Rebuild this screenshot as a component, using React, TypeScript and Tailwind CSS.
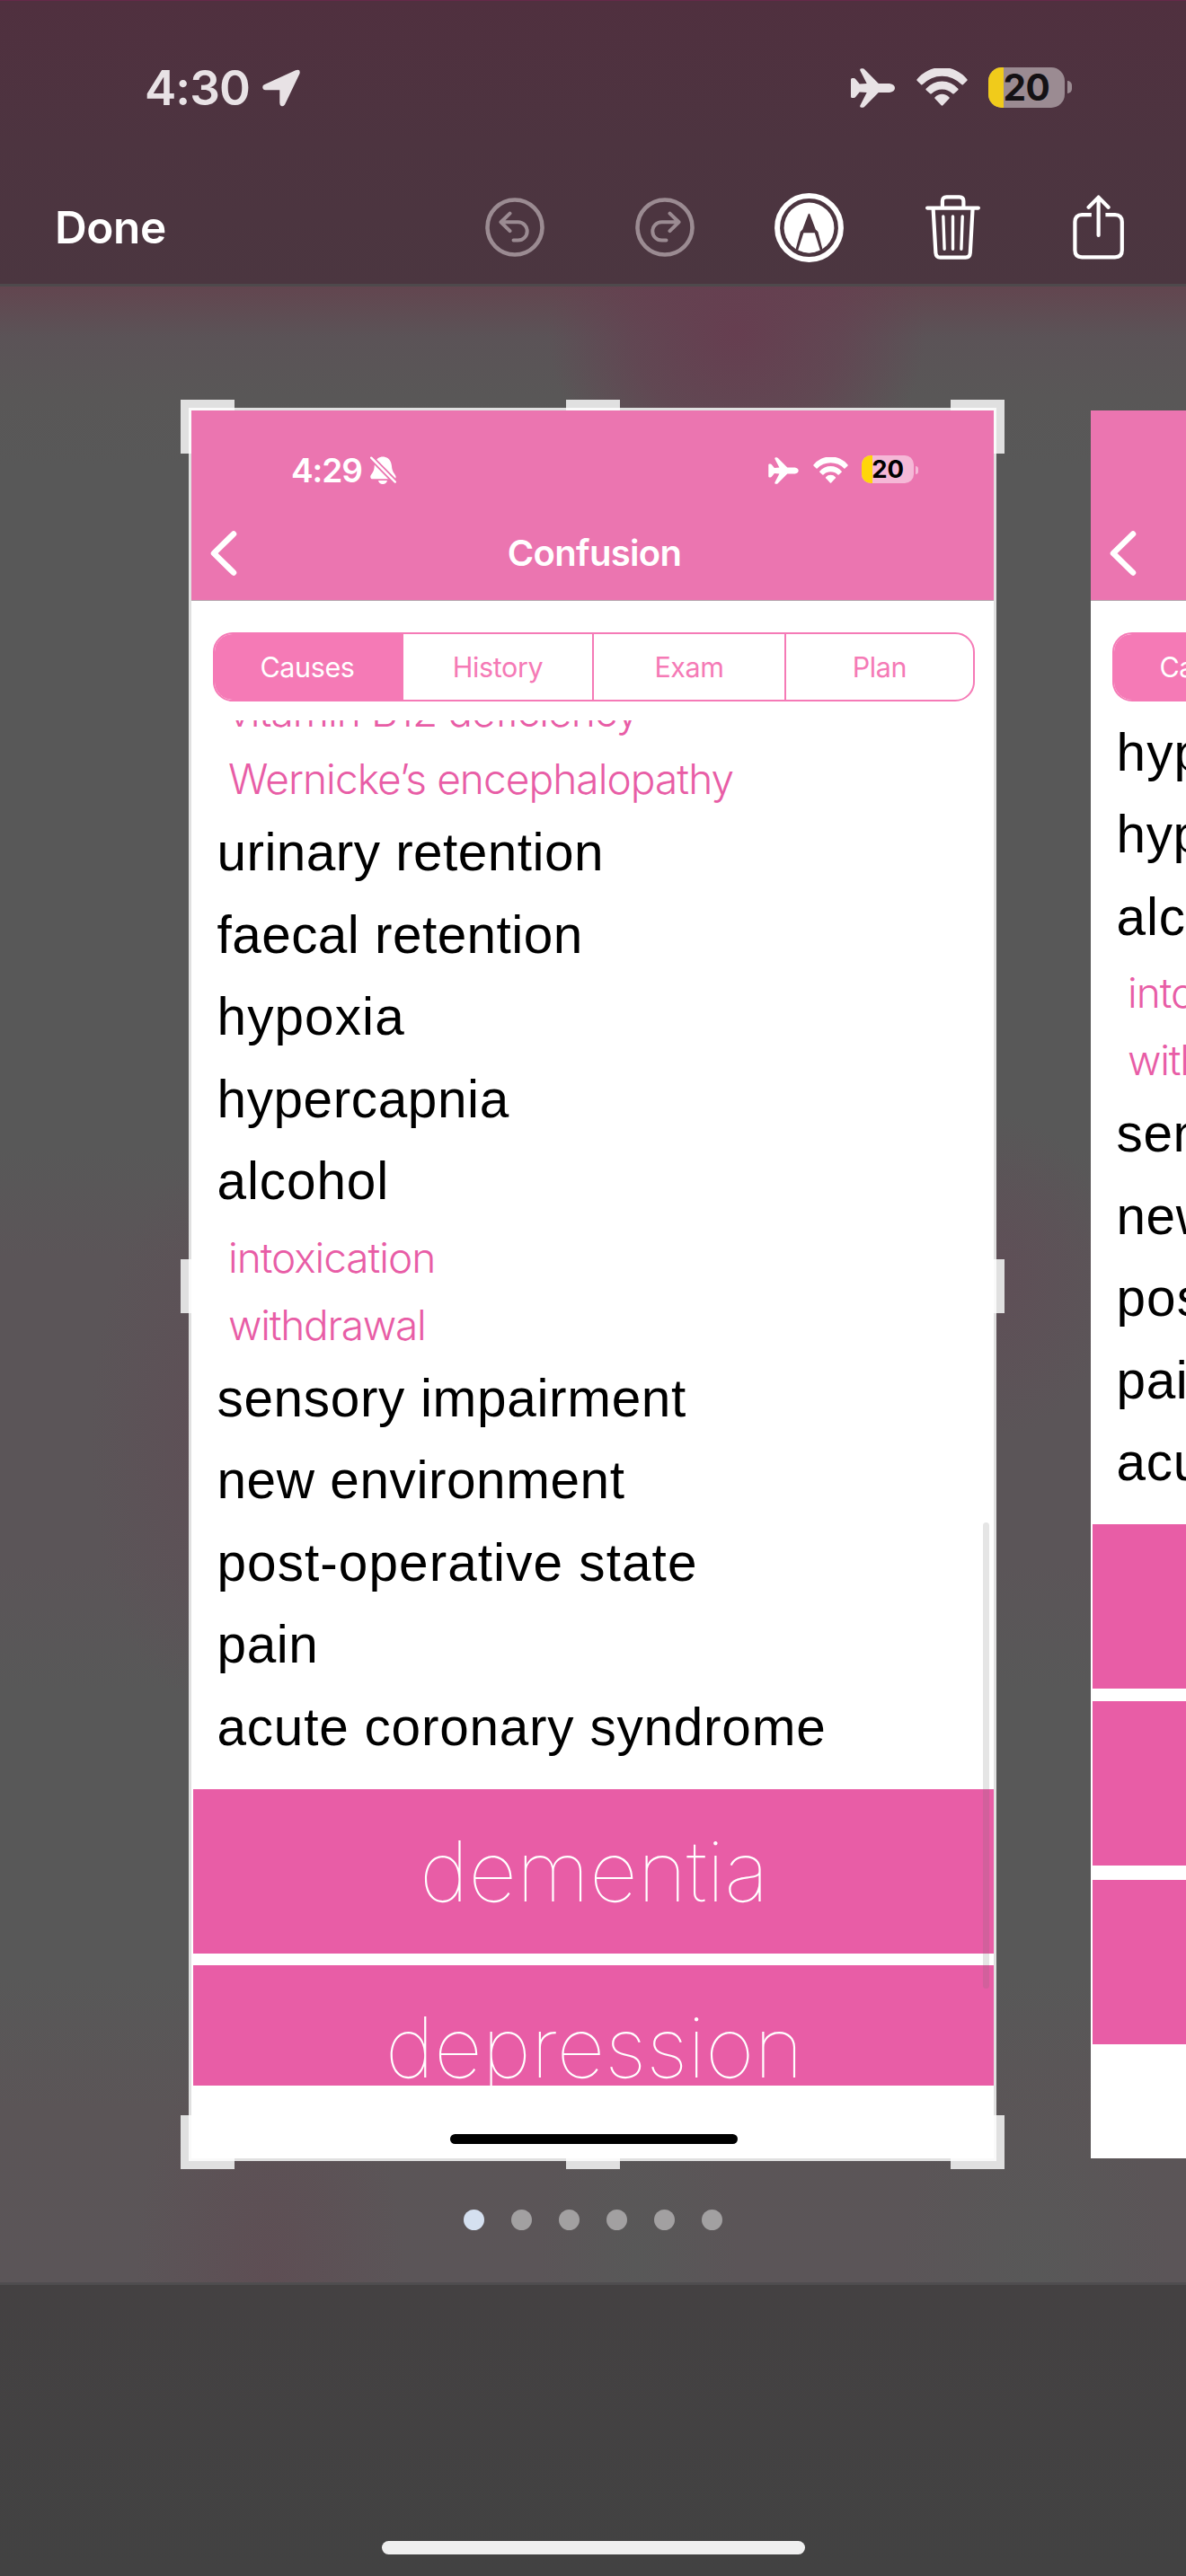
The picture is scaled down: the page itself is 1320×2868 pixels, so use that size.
import React from "react";

type Row = { text: string; sub?: boolean; tracking?: string };

const ROWS: Row[] = [
  { text: "vitamin B12 deficiency", sub: true, tracking: "tracking-[-0.95px]" },
  { text: "Wernicke’s encephalopathy", sub: true, tracking: "tracking-[-0.94px]" },
  { text: "urinary retention", tracking: "tracking-[0.45px]" },
  { text: "faecal retention", tracking: "tracking-[0.45px]" },
  { text: "hypoxia", tracking: "tracking-[1.1px]" },
  { text: "hypercapnia", tracking: "tracking-[0.6px]" },
  { text: "alcohol", tracking: "tracking-[0.9px]" },
  { text: "intoxication", sub: true, tracking: "tracking-[-1.05px]" },
  { text: "withdrawal", sub: true, tracking: "tracking-[-1.25px]" },
  { text: "sensory impairment", tracking: "tracking-[0.67px]" },
  { text: "new environment", tracking: "tracking-[0.57px]" },
  { text: "post-operative state", tracking: "tracking-[1.06px]" },
  { text: "pain", tracking: "tracking-[0.6px]" },
  { text: "acute coronary syndrome", tracking: "tracking-[0.78px]" },
];

const Airplane = ({ className }: { className: string }) => (
  <svg viewBox="0 0 49 44" className={className} fill="currentColor">
    <path d="M0 12.5Q0 11 1.5 11H3.2Q4.5 11 5.2 12L9.7 17.6L17.7 17L10.3 2.5Q9.8 .3 12 .3H13Q14.5 .3 15.5 1.6L30.8 17H43Q49 18 49 22Q49 26 43 27H30.8L15.5 42.4Q14.5 43.7 13 43.7H12Q9.8 43.7 10.3 41.5L17.7 27L9.7 26.4L5.2 32Q4.5 33 3.2 33H1.5Q0 33 0 31.5Z" />
  </svg>
);

const Wifi = ({ className }: { className: string }) => (
  <svg viewBox="0 0 57 42" className={className} fill="currentColor">
    <path d="M.6 12.2A36 36 0 0 1 56.4 12.2Q57 13 56.4 13.7L51.8 18.2Q51 18.8 50.2 18.1A30 30 0 0 0 6.8 18.1Q6 18.8 5.2 18.2L.6 13.7Q0 13 .6 12.2Z" />
    <path d="M10.6 22.8A23.5 23.5 0 0 1 46.4 22.8Q47 23.6 46.3 24.3L41.8 28.2Q41 28.8 40.2 28.2A16.7 16.7 0 0 0 16.8 28.2Q16 28.8 15.2 28.2L10.7 24.3Q10 23.6 10.6 22.8Z" />
    <path d="M20.6 32.3A10.5 10.5 0 0 1 36.4 32.3Q37 33 36.4 33.8L29.4 41.3Q28.5 42.2 27.6 41.3L20.6 33.8Q20 33 20.6 32.3Z" />
  </svg>
);

const Chevron = () => (
  <svg viewBox="0 0 30 50" className="ml-[21px] h-[50px] w-[30px]" fill="none" stroke="white" strokeWidth="6.5" strokeLinecap="round" strokeLinejoin="round">
    <path d="M26 3.5L4 25L26 46.5" />
  </svg>
);

const BellSlash = () => (
  <svg viewBox="0 0 29 31" className="ml-[10px] h-[31px] w-[29px]">
    <path fill="white" d="M14 .5C19.5 .5 23.5 4.5 24 11C24.3 17 27 19 28.5 22Q29 25.2 26.5 25.2H2Q0 25 .3 22C1.5 19.5 4.5 17 4.7 11C5 4.5 9 .5 14 .5ZM9 27H19Q18 31 14 31Q10 31 9 27Z" />
    <path d="M1 1.5L28 28.8" stroke="#eb75b0" strokeWidth="6" />
    <path d="M1.2 1.7L27.8 28.6" stroke="white" strokeWidth="2.4" strokeLinecap="round" />
  </svg>
);

const Undo = ({ className }: { className: string }) => (
  <svg viewBox="0 0 66 66" className={className} fill="none" stroke="#9b8b92" strokeWidth="4" strokeLinecap="round" strokeLinejoin="round">
    <circle cx="33" cy="33" r="30.5" strokeWidth="4.6" />
    <path d="M27.5 17.6L17.5 27.3L27.5 37.2M18 27.3H36.6A10.1 10.1 0 0 1 36.6 47.5H31.5" />
  </svg>
);

const Markup = () => (
  <svg viewBox="0 0 77 77" className="ml-[89px] size-[77px]">
    <circle cx="38.5" cy="38.5" r="35.4" fill="none" stroke="white" strokeWidth="6" />
    <circle cx="38.5" cy="38.5" r="27.9" fill="white" />
    <path fill="#4c353f" d="M37.4 24Q38.5 21.5 39.6 24L45.8 40.6L48.4 43L53.4 62.4L50.6 64.5H26.4L23.6 62.4L28.8 43L31.2 40.6Z" />
    <path fill="white" d="M32.4 44.2H44.8L50.8 63.6Q45 66.4 38.5 66.4Q32 66.4 26.2 63.6Z" />
  </svg>
);

const Trash = () => (
  <svg viewBox="0 0 61 73" className="ml-[91px] h-[73px] w-[61px]" fill="none" stroke="white" strokeWidth="4.2" strokeLinecap="round" strokeLinejoin="round">
    <path d="M2.1 14.6H58.9M18.9 14V7Q18.9 2.4 23.5 2.4H37.8Q42.4 2.4 42.4 7V14" />
    <path d="M8.6 15L11.4 64.5Q11.8 69.6 16.5 69.6H44.8Q49.4 69.6 49.8 64.5L52.6 15" />
    <path strokeWidth="3.4" d="M19.8 24L21.1 60.3M30.5 24V60.3M41.2 24L39.9 60.3" />
  </svg>
);

const Share = () => (
  <svg viewBox="0 0 58 73" className="ml-[103px] h-[73px] w-[58px]" fill="none" stroke="white" strokeWidth="4.2" strokeLinecap="round" strokeLinejoin="round">
    <path strokeLinecap="butt" d="M20.8 22.2H10.2Q2.4 22.2 2.4 30V61.6Q2.4 69.4 10.2 69.4H47Q54.8 69.4 54.8 61.6V30Q54.8 22.2 47 22.2H36.4" />
    <path d="M28.6 3V45M17.6 13.8L28.6 2.6L39.6 13.8" />
  </svg>
);

function Band({ label, className }: { label: string; className: string }) {
  return (
    <div className={`flex h-[183px] shrink-0 items-center justify-center bg-[#e85da6] pl-[2px] font-[Inter] text-[94px] font-thin text-white ${className}`}>
      <span className="tracking-[-0.3px]">{label}</span>
    </div>
  );
}

function AppShot({ rows, className, inset, last }: { rows: Row[]; className: string; inset: string; last?: boolean }) {
  return (
    <div className="relative flex h-[1946px] w-[893px] shrink-0 flex-col bg-white">
      <header className="h-[212px] shrink-0 border-b border-[#b5a5ad] bg-[#eb75b0] font-[Inter] text-white">
        <div className="flex h-[132px] items-center pt-[1px]">
          <span className="ml-[111px] w-[78px] text-[37px] leading-none font-semibold tracking-[-1.1px]">4:29</span>
          <BellSlash />
          <Airplane className="ml-[414px] h-[30px] w-[34px]" />
          <Wifi className="ml-[16px] h-[29px] w-[39px]" />
          <div className="relative -top-px ml-[15px] flex h-[31px] w-[58px] items-center justify-center overflow-hidden rounded-[10px] bg-[#f5b8d7]">
            <div className="absolute inset-y-0 left-0 w-[12px] bg-[#ffd60a]" />
            <span className="relative text-[27.5px] leading-[31px] font-bold tracking-[-0.3px] text-black">20</span>
          </div>
          <div className="ml-[2px] h-[9px] w-[3px] rounded-r-full bg-[#f5b8d7]" />
        </div>
        <div className="grid grid-cols-[160px_1fr_160px] items-center pt-[2px]">
          <Chevron />
          <h1 className="pl-[4px] text-center text-[40px] leading-[50px] font-semibold tracking-[-0.7px]">Confusion</h1>
        </div>
      </header>
      <div className="mt-[35px] ml-[24px] grid h-[77px] w-[848px] shrink-0 grid-cols-[210px_212px_214px_1fr] overflow-hidden rounded-[22px] border-2 border-[#f57ab6] font-[Inter] text-[30.5px] tracking-[-0.4px] text-[#f57ab6]">
        <div className="flex items-center justify-center bg-[#f57ab6] pr-[4px] text-white">Causes</div>
        <div className="flex items-center justify-center border-r-2 border-[#f57ab6]">History</div>
        <div className="flex items-center justify-center border-r-2 border-[#f57ab6]">Exam</div>
        <div className="flex items-center justify-center">Plan</div>
      </div>
      <div className="mt-[21px] h-[1520px] shrink-0 overflow-hidden">
        <div className={`flex flex-col ${className}`}>
          {rows.map((r) =>
            r.sub ? (
              <div key={r.text} className={`h-[75px] pl-[41px] font-[Inter] text-[46px] leading-[78px] font-light whitespace-nowrap text-[#e85da6] ${r.tracking}`}>
                {r.text}
              </div>
            ) : (
              <div key={r.text} className={`h-[91.5px] pl-[28.5px] font-['Liberation_Sans'] text-[58.5px] leading-[91.5px] whitespace-nowrap text-black ${r.tracking}`}>
                {r.text}
              </div>
            ),
          )}
          <div className={`mt-[23.5px] flex flex-col ${inset}`}>
            <Band label="dementia" className="" />
            <Band label="depression" className="mt-[13.5px]" />
            {last && <Band label="mania" className="mt-[16.5px]" />}
          </div>
        </div>
      </div>
      <div className="mt-[54px] ml-[288px] h-[11px] w-[320px] shrink-0 rounded-full bg-black" />
    </div>
  );
}

const HANDLES = [
  "top-[445px] left-[201px] h-[12px] w-[60px]",
  "top-[457px] left-[201px] h-[48px] w-[12px]",
  "top-[445px] left-[630px] h-[12px] w-[60px]",
  "top-[445px] left-[1058px] h-[12px] w-[60px]",
  "top-[457px] left-[1106px] h-[48px] w-[12px]",
  "top-[1402px] left-[201px] h-[60px] w-[12px]",
  "top-[1402px] left-[1106px] h-[60px] w-[12px]",
  "top-[2355px] left-[201px] h-[48px] w-[12px]",
  "top-[2403px] left-[201px] h-[12px] w-[60px]",
  "top-[2403px] left-[630px] h-[12px] w-[60px]",
  "top-[2403px] left-[1058px] h-[12px] w-[60px]",
  "top-[2355px] left-[1106px] h-[48px] w-[12px]",
];

const BACKDROP =
  "bg-[radial-gradient(ellipse_210px_190px_at_820px_370px,#663e50_0%,#663e5099_55%,transparent_100%),radial-gradient(ellipse_130px_300px_at_230px_1600px,#5e4f56_0%,transparent_100%),radial-gradient(ellipse_130px_180px_at_1110px_1420px,#5f4f57_0%,transparent_100%),radial-gradient(ellipse_150px_300px_at_300px_2541px,#5e4e54_0%,transparent_100%),radial-gradient(ellipse_150px_240px_at_1150px_2541px,#585858_0%,transparent_100%),radial-gradient(ellipse_110px_200px_at_710px_2520px,#585858_0%,transparent_100%),linear-gradient(#63454f_316px,#5b5357_375px,#595757_440px,#585858_520px,#585858_1280px,#5b5558_1400px,#5b5558_1740px,#585858_1880px,#585858_2200px,#5b5557_2350px,#5b5558_2541px)]";

export default function App() {
  return (
    <div className={`relative flex h-[2868px] w-[1320px] flex-col overflow-hidden ${BACKDROP}`}>
      <div className="h-[319px] shrink-0 border-t border-b-[3px] border-t-[#66294a] border-b-[#4e494c] bg-[linear-gradient(#50303f,#4d3440_50%,#4b3640)] font-[Inter]">
        <div className="flex h-[194px] items-center text-[#e8e2e5]">
          <span className="ml-[161px] w-[121px] text-[53px] leading-none font-semibold tracking-[-1px]">4:30</span>
          <svg viewBox="0 0 42 42" className="ml-[10px] h-[42px] w-[42px]" fill="currentColor">
            <path d="M2 17.3L37 1.2Q42.8 -.8 41.5 5L25 39.5Q23.5 42 21 41Q19.3 40 19.3 37.5V23.2H3.5Q.5 23 .3 20.5Q.1 18.2 2 17.3Z" />
          </svg>
          <Airplane className="ml-[613px] h-[44px] w-[49px]" />
          <Wifi className="relative -top-px ml-[24px] h-[42px] w-[57px]" />
          <div className="relative -top-px ml-[23px] flex h-[45px] w-[85px] items-center justify-center overflow-hidden rounded-[15px] bg-[#9b8b92]">
            <div className="absolute inset-y-0 left-0 w-[17px] bg-[#f0cb1b]" />
            <span className="relative text-[40.5px] leading-[45px] font-bold tracking-[-0.4px] text-[#141114]">20</span>
          </div>
          <div className="relative -top-px ml-[3px] h-[14px] w-[5px] rounded-r-full bg-[#9b8b92]" />
        </div>
        <div className="flex h-[116px] items-center text-white">
          <span className="ml-[61px] w-[479px] text-[49.5px] font-semibold tracking-[-0.4px]">Done</span>
          <Undo className="size-[66px]" />
          <Undo className="ml-[101px] size-[66px] -scale-x-100" />
          <Markup />
          <Trash />
          <Share />
        </div>
      </div>

      <div className="flex gap-[108px] pt-[138px] pl-[213px]">
        <AppShot rows={ROWS} className="-mt-[49px]" inset="ml-[1.5px]" />
        <AppShot rows={ROWS.slice(4)} className="-mt-[10.5px]" inset="ml-[2px]" last />
      </div>

      <div className="mt-[57px] flex justify-center gap-[30px]">
        <div className="size-[23px] rounded-full bg-[#d5e0f0]" />
        <div className="size-[23px] rounded-full bg-[#a2a0a1]" />
        <div className="size-[23px] rounded-full bg-[#a2a0a1]" />
        <div className="size-[23px] rounded-full bg-[#a2a0a1]" />
        <div className="size-[23px] rounded-full bg-[#a2a0a1]" />
        <div className="size-[23px] rounded-full bg-[#a2a0a1]" />
      </div>

      <div className="mt-auto flex h-[327px] items-end justify-center border-t-[3px] border-[#4f4d4f] bg-[linear-gradient(#444142,#424242)] pb-[24px]">
        <div className="h-[15px] w-[471px] rounded-full bg-[#efefef]" />
      </div>

      {/* Crop frame, its handles and the scroll indicator lie over the selected page */}
      <div className="absolute top-[454px] left-[210px] h-[1952px] w-[899px] border-[3px] border-[#e0e0e0]" />
      {HANDLES.map((h) => (
        <div key={h} className={`absolute bg-[#e0e0e0] ${h}`} />
      ))}
      <div className="absolute top-[454px] left-[210px] h-[51px] w-[51px] border-t-[3px] border-l-[3px] border-[#fafafa]" />
      <div className="absolute top-[454px] left-[630px] h-[3px] w-[60px] bg-[#fafafa]" />
      <div className="absolute top-[454px] left-[1058px] h-[51px] w-[51px] border-t-[3px] border-r-[3px] border-[#fafafa]" />
      <div className="absolute top-[1402px] left-[210px] h-[60px] w-[3px] bg-[#fafafa]" />
      <div className="absolute top-[1402px] left-[1106px] h-[60px] w-[3px] bg-[#fafafa]" />
      <div className="absolute top-[2355px] left-[210px] h-[51px] w-[51px] border-b-[3px] border-l-[3px] border-[#fafafa]" />
      <div className="absolute top-[2403px] left-[630px] h-[3px] w-[60px] bg-[#fafafa]" />
      <div className="absolute top-[2355px] left-[1058px] h-[51px] w-[51px] border-r-[3px] border-b-[3px] border-[#fafafa]" />
      <div className="absolute top-[1695px] left-[1094px] h-[519px] w-[7px] rounded-full bg-[#6e6e6e]/18" />
    </div>
  );
}
